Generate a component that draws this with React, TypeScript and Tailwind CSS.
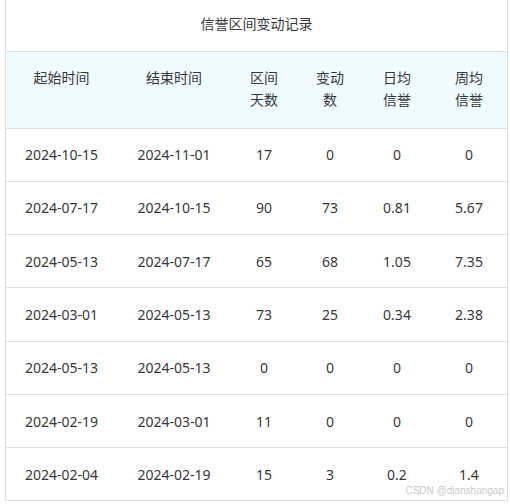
import React from "react";

const rows = [
  ["2024-10-15", "2024-11-01", "17", "0", "0", "0"],
  ["2024-07-17", "2024-10-15", "90", "73", "0.81", "5.67"],
  ["2024-05-13", "2024-07-17", "65", "68", "1.05", "7.35"],
  ["2024-03-01", "2024-05-13", "73", "25", "0.34", "2.38"],
  ["2024-05-13", "2024-05-13", "0", "0", "0", "0"],
  ["2024-02-19", "2024-03-01", "11", "0", "0", "0"],
  ["2024-02-04", "2024-02-19", "15", "3", "0.2", "1.4"],
];

const widths = ["w-[111px]", "w-[114px]", "w-[66px]", "w-[66px]", "w-[68px]", "w-[76px]"];
const heads: React.ReactNode[] = [
  "起始时间",
  "结束时间",
  <>区间<br />天数</>,
  <>变动<br />数</>,
  <>日均<br />信誉</>,
  <>周均<br />信誉</>,
];

export default function App() {
  return (
    <div
      className="relative w-[510px] h-[504px] bg-white text-[#383838] text-[14px]"
      style={{ fontFamily: '"Noto Sans", "Noto Sans CJK SC", sans-serif' }}
    >
      <div className="ml-[5px] w-[503px] border-x border-b border-[#dcdfe6]">
        <div className="h-[52px] border-b border-[#dcdfe6] flex items-center justify-center pb-[4px]">
          信誉区间变动记录
        </div>
        <table className="w-[501px] table-fixed border-collapse">
          <colgroup>
            {widths.map((w, i) => (
              <col key={i} className={w} />
            ))}
          </colgroup>
          <thead>
            <tr className="h-[76px] bg-[#effbff] border-b border-[#dcdfe6]">
              {heads.map((h, i) => (
                <th key={i} className="font-normal leading-[22px] align-top pt-[15px]">
                  {h}
                </th>
              ))}
            </tr>
          </thead>
          <tbody>
            {rows.map((r, i) => (
              <tr key={i} className={i < rows.length - 1 ? "h-[53.3px] border-b border-[#dcdfe6]" : "h-[52px]"}>
                {r.map((c, j) => (
                  <td key={j} className="text-center align-middle">
                    {c}
                  </td>
                ))}
              </tr>
            ))}
          </tbody>
        </table>
      </div>
      <div
        className="absolute right-[6px] bottom-[6px] text-[10px] text-[#c8c8c8]"
        style={{ fontFamily: '"Liberation Sans", sans-serif' }}
      >
        CSDN @dianshangap
      </div>
    </div>
  );
}
